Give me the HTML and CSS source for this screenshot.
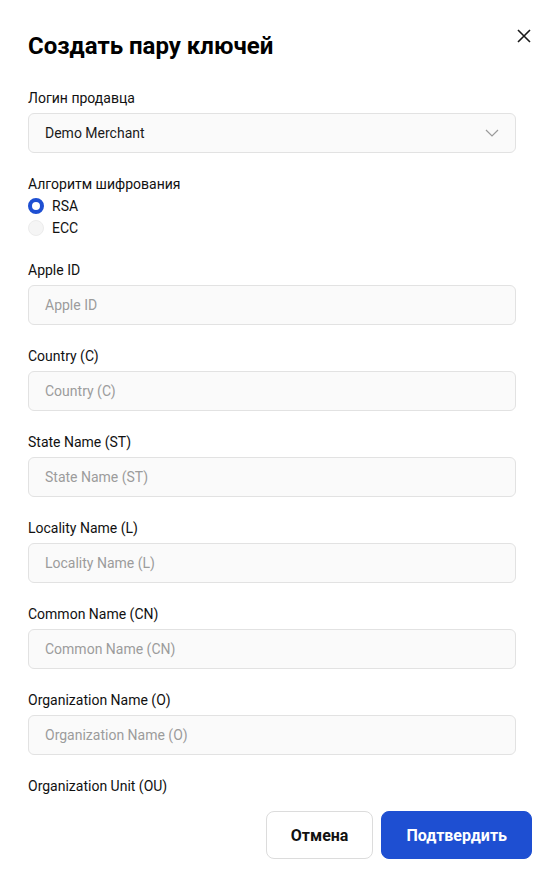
FILE: index.html
```html
<!DOCTYPE html>
<html lang="ru">
<head>
<meta charset="utf-8">
<title>Создать пару ключей</title>
<link rel="stylesheet" href="styles.css">
</head>
<body>
<div class="modal">
  <div class="modal-header">
    <h2 class="modal-title">Создать пару ключей</h2>
    <button class="close-btn" aria-label="Закрыть">
      <svg width="14" height="14" viewBox="0 0 14 14"><path d="M1 1L13 13M13 1L1 13" stroke="#1a1a1a" stroke-width="1.6" fill="none"/></svg>
    </button>
  </div>
  <div class="modal-body">
    <div class="field">
      <div class="label">Логин продавца</div>
      <div class="select">
        <span>Demo Merchant</span>
        <svg class="chevron" width="14" height="8" viewBox="0 0 14 8"><path d="M1 1L7 7L13 1" stroke="#9a9a9a" stroke-width="1.2" fill="none"/></svg>
      </div>
    </div>
    <div class="field radio-field">
      <div class="label">Алгоритм шифрования</div>
      <div class="radio-row"><span class="radio checked"></span><span>RSA</span></div>
      <div class="radio-row"><span class="radio"></span><span>ECC</span></div>
    </div>
    <div class="field">
      <div class="label">Apple ID</div>
      <div class="input">Apple ID</div>
    </div>
    <div class="field">
      <div class="label">Country (C)</div>
      <div class="input">Country (C)</div>
    </div>
    <div class="field">
      <div class="label">State Name (ST)</div>
      <div class="input">State Name (ST)</div>
    </div>
    <div class="field">
      <div class="label">Locality Name (L)</div>
      <div class="input">Locality Name (L)</div>
    </div>
    <div class="field">
      <div class="label">Common Name (CN)</div>
      <div class="input">Common Name (CN)</div>
    </div>
    <div class="field">
      <div class="label">Organization Name (O)</div>
      <div class="input">Organization Name (O)</div>
    </div>
    <div class="field">
      <div class="label">Organization Unit (OU)</div>
    </div>
  </div>
  <div class="modal-footer">
    <button class="btn btn-secondary">Отмена</button>
    <button class="btn btn-primary">Подтвердить</button>
  </div>
</div>
</body>
</html>
```
FILE: styles.css
```css
* { box-sizing: border-box; }
html, body {
  margin: 0;
  padding: 0;
  background: #ffffff;
}
body {
  font-family: Roboto, "Noto Sans", Arial, sans-serif;
  color: #111111;
  font-size: 14px;
}
.modal {
  width: 541px;
  height: 870px;
  display: flex;
  flex-direction: column;
  background: #fff;
}
.modal-header {
  display: flex;
  justify-content: space-between;
  align-items: flex-start;
  padding: 32px 10px 0 28px;
}
.modal-title {
  margin: 0;
  font-size: 24px;
  line-height: 28px;
  font-weight: 700;
  color: #000;
}
.close-btn {
  margin-top: -3px;
  width: 14px;
  height: 14px;
  padding: 0;
  border: 0;
  background: none;
  display: flex;
}
.modal-body {
  flex: 1;
  overflow: hidden;
  padding: 28px 25px 0 28px;
}
.field {
  display: flex;
  flex-direction: column;
  margin-bottom: 21px;
}
.label {
  font-size: 14px;
  line-height: 20px;
  color: #111;
  margin-bottom: 5px;
}
.select, .input {
  height: 40px;
  border: 1px solid #e2e2e2;
  border-radius: 6px;
  background: #fafafa;
  display: flex;
  align-items: center;
  padding: 0 16px;
  font-size: 14px;
}
.select {
  justify-content: space-between;
  color: #1a1a1a;
}
.input {
  color: #9c9c9c;
}
.radio-field .label { margin-bottom: 1px; }
.radio-field { margin-bottom: 21px; }
.radio-row {
  display: flex;
  align-items: center;
  gap: 8px;
  height: 22px;
  font-size: 14px;
  color: #111;
}
.radio {
  width: 16px;
  height: 16px;
  border-radius: 50%;
  border: 1px solid #ececec;
  background: #f5f5f5;
}
.radio.checked {
  border: 4px solid #1e4fd2;
  background: #fff;
}
.modal-footer {
  display: flex;
  justify-content: flex-end;
  gap: 8px;
  padding: 12px 9px 11px 0;
  background: #fff;
}
.btn {
  height: 48px;
  padding: 0 24px;
  border-radius: 8px;
  font-family: Roboto, "Noto Sans", Arial, sans-serif;
  font-size: 16px;
  font-weight: 700;
  cursor: pointer;
}
.btn-secondary {
  background: #fff;
  border: 1px solid #dcdcdc;
  color: #111;
}
.btn-primary {
  background: #1e4fd2;
  border: 1px solid #1e4fd2;
  color: #fff;
}
```
